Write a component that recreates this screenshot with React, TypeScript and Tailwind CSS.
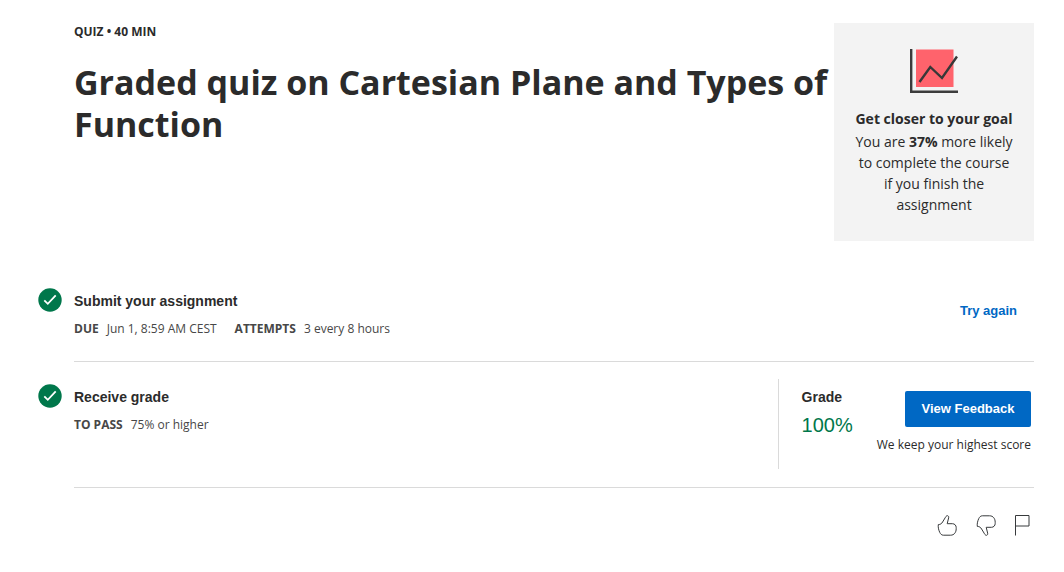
import type { ReactNode } from "react";

function GoalChart() {
  return (
    <svg width="48" height="44" viewBox="0 0 48 44" fill="none" aria-hidden="true">
      <rect x="6" y="0.5" width="37.5" height="37.5" fill="#ff636c" />
      <path d="M1.2 0v42.7H48" stroke="#3c3c3c" strokeWidth="2.4" />
      <path d="M9.5 33 20.3 18 32 29 47 7.5" stroke="#383838" strokeWidth="2.4" />
    </svg>
  );
}

function DoneIcon() {
  return (
    <svg className="shrink-0" width="24" height="24" viewBox="0 0 24 24" fill="none" role="img" aria-label="Completed">
      <circle cx="12" cy="12" r="11.7" fill="#00774b" />
      <path d="m6.3 12.3 3.5 3.5 7.9-8.5" stroke="#fff" strokeWidth="1.8" />
    </svg>
  );
}

function ThumbIcon() {
  return (
    <svg width="20" height="21" viewBox="0 0 20 21" fill="none" stroke="#373a3c" strokeWidth="1" strokeLinejoin="round" aria-hidden="true">
      <path d="M1.3 9.6C3.5 9.5 4.7 8.600 5.600 7L8.500 2.200C9.200 1 9.900.5 10.600.7c1 .3 1.300 1.100 1 2.300L10.200 8.700h5.200c2.300 0 3.800 1.700 3.800 3.900v1.100c0 3.600-2 6.500-5.600 6.500H6.300c-1.700 0-2.800-1.300-3.500-2.700-1-2.200-1.900-5-1.500-7.900Z" />
    </svg>
  );
}

function FlagIcon() {
  return (
    <svg width="15" height="21" viewBox="1 0 15 21" fill="none" stroke="#373a3c" strokeWidth="1" aria-hidden="true">
      <path d="M1.500 20.500V.500h13.500v10.500H1.500" />
    </svg>
  );
}

function Detail({ label, children }: { label: string; children: ReactNode }) {
  return (
    <div className="flex gap-2">
      <dt className="font-bold">{label}</dt>
      <dd>{children}</dd>
    </div>
  );
}

function Step({ title, details, children }: { title: string; details: ReactNode; children: ReactNode }) {
  return (
    <li className="flex gap-3">
      <DoneIcon />
      <div className="flex grow justify-between border-b border-[#dadada] pb-[18px]">
        <div className="pt-1">
          <h2 className="font-['Liberation_Sans',sans-serif] text-sm leading-[18px] font-bold">{title}</h2>
          <dl className="mt-2.5 flex gap-[18px] text-xs leading-[18px] text-[#474747]">{details}</dl>
        </div>
        {children}
      </div>
    </li>
  );
}

export default function App() {
  return (
    <main className="bg-white pt-[23px] pr-[30px] pb-8 pl-[38px] font-['Open_Sans',sans-serif] text-[#2b2b2b]">
      <header className="flex items-start pl-9">
        <div className="min-w-0 grow">
          <p className="text-xs leading-[18px] font-bold">QUIZ • 40 MIN</p>
          <h1 className="mt-5 text-[34px] leading-[42px] font-bold">Graded quiz on Cartesian Plane and Types of Function</h1>
        </div>
        <aside className="flex w-[200px] shrink-0 flex-col items-center bg-[#f3f3f3] px-5 py-[26px] text-center text-sm leading-[21px]">
          <GoalChart />
          <h2 className="mt-[15px] mb-0.5 font-bold whitespace-nowrap">Get closer to your goal</h2>
          <p>
            You are <strong>37%</strong> more likely to complete the course if you finish the assignment
          </p>
        </aside>
      </header>

      <ol className="mt-[47px] flex flex-col gap-[22px]">
        <Step
          title="Submit your assignment"
          details={
            <>
              <Detail label="DUE">Jun 1, 8:59 AM CEST</Detail>
              <Detail label="ATTEMPTS">3 every 8 hours</Detail>
            </>
          }
        >
          <div className="flex h-[55px] items-center pr-[17px]">
            <button type="button" className="pb-2.5 font-['Liberation_Sans',sans-serif] text-[13px] font-bold text-[#0068c4]">
              Try again
            </button>
          </div>
        </Step>
        <Step title="Receive grade" details={<Detail label="TO PASS">75% or higher</Detail>}>
          <div className="-mt-[5px] flex h-[90px] border-l border-[#dadada] pt-3 pr-[3px] pl-[23px]">
            <div className="font-['Liberation_Sans',sans-serif]">
              <h3 className="text-sm leading-3 font-bold">Grade</h3>
              <p className="mt-2.5 text-xl leading-6 text-[#00774b]">100%</p>
            </div>
            <div className="ml-6 flex flex-col items-end">
              <button type="button" className="h-9 min-w-[126px] rounded-xs bg-[#0068c4] px-4 font-['Liberation_Sans',sans-serif] text-[13px] font-bold text-white">
                View Feedback
              </button>
              <p className="mt-[9px] text-xs leading-[18px]">We keep your highest score</p>
            </div>
          </div>
        </Step>
      </ol>

      <div className="mt-[27px] flex justify-end gap-[19px] pr-1">
        <button type="button" aria-label="Like">
          <ThumbIcon />
        </button>
        <button type="button" aria-label="Dislike" className="-scale-y-100">
          <ThumbIcon />
        </button>
        <button type="button" aria-label="Report an issue">
          <FlagIcon />
        </button>
      </div>
    </main>
  );
}
